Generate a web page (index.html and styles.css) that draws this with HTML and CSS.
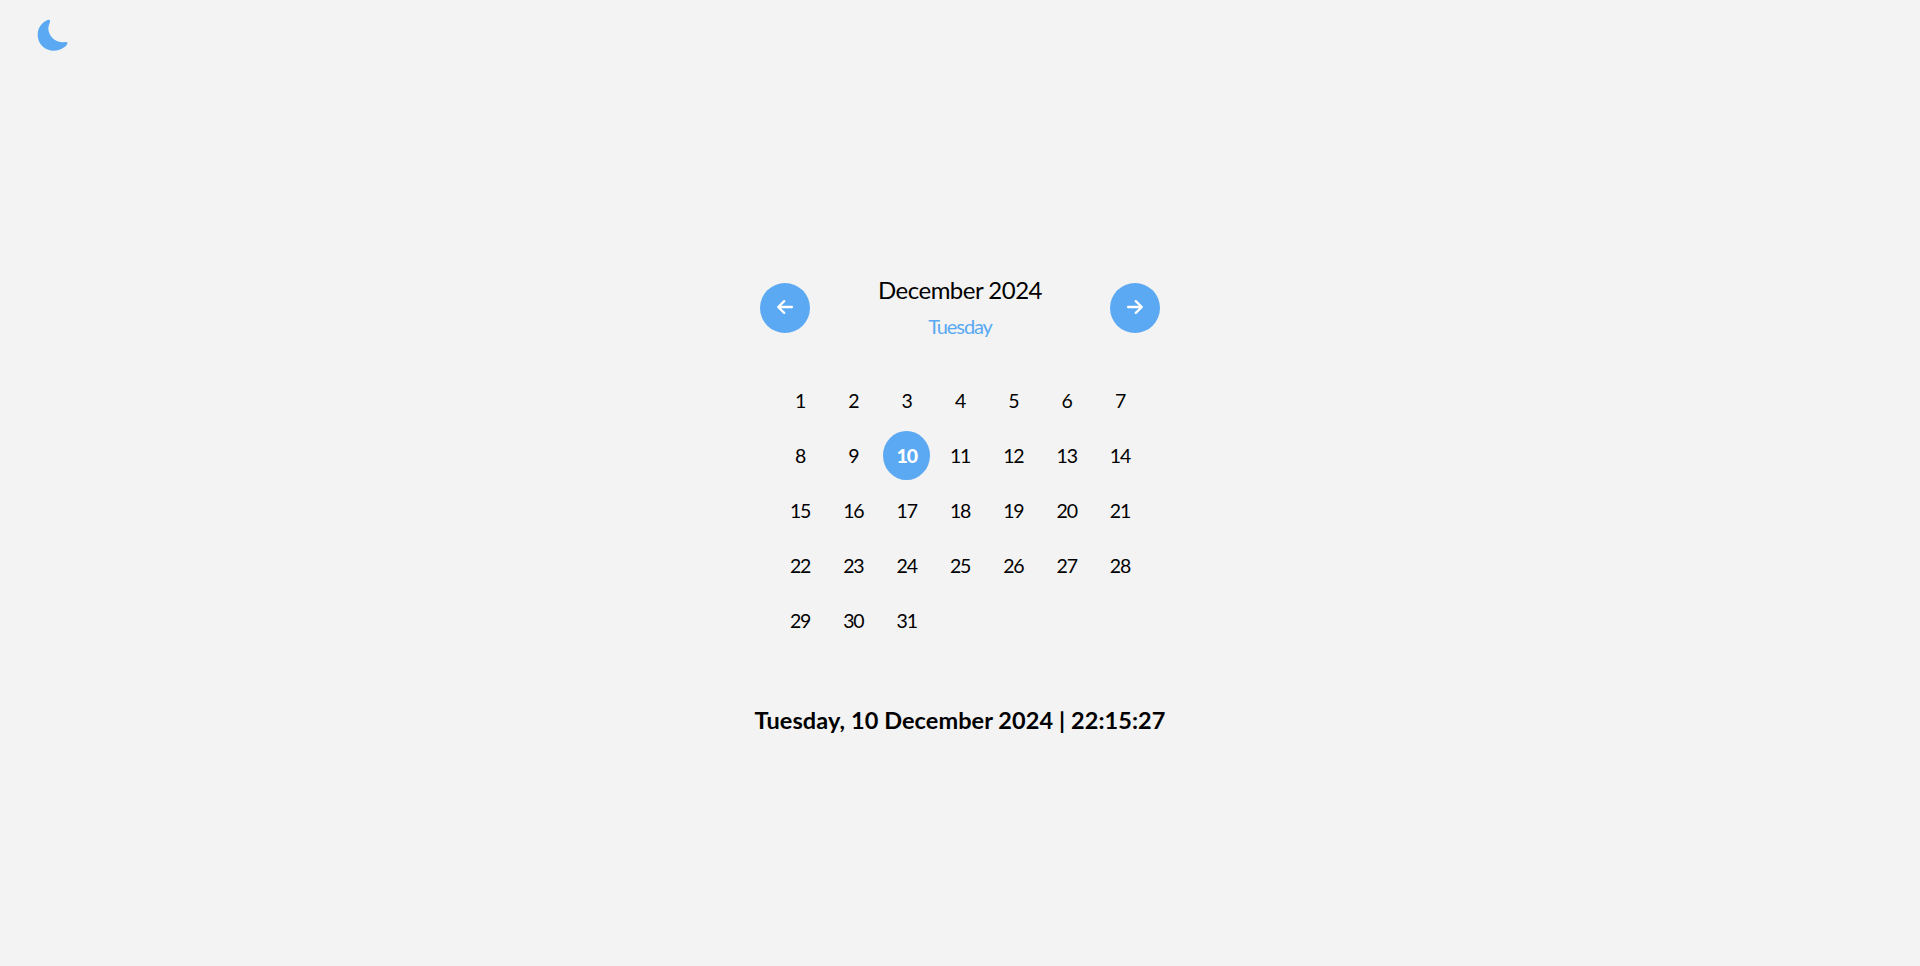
FILE: index.html
```html
<!DOCTYPE html>
<html lang="en">
<head>
<meta charset="utf-8">
<title>Calendar</title>
<link rel="stylesheet" href="styles.css">
</head>
<body>
<header class="topbar">
<svg class="moon" viewBox="0 0 93 96"><path d="M34 2Q41 1 39 9C35 18 34 25 34 31C36 52 54 70 78 70L87 69Q93 69 91 75C83 87 68 95 51 95C24 95 2 75 2 47C2 26 15 9 34 2Z"/></svg>
</header>
<main class="calendar">
<div class="head">
<button class="nav" aria-label="Previous month"><svg class="arrow" viewBox="0 0 18 16"><path d="M16 8H2.4M8.2 2.1L2.2 8L8.2 13.9"/></svg></button>
<div class="titles"><div class="month">December 2024</div><div class="weekday">Tuesday</div></div>
<button class="nav" aria-label="Next month"><svg class="arrow" viewBox="0 0 18 16"><path d="M2 8H15.6M9.8 2.1L15.8 8L9.8 13.9"/></svg></button>
</div>
<div class="days">
<span>1</span><span>2</span><span>3</span><span>4</span><span>5</span><span>6</span><span>7</span>
<span>8</span><span>9</span><span class="today">10</span><span>11</span><span>12</span><span>13</span><span>14</span>
<span>15</span><span>16</span><span>17</span><span>18</span><span>19</span><span>20</span><span>21</span>
<span>22</span><span>23</span><span>24</span><span>25</span><span>26</span><span>27</span><span>28</span>
<span>29</span><span>30</span><span>31</span>
</div>
<div class="clock">Tuesday, 10 December 2024 | 22:15:27</div>
</main>
</body>
</html>
```
FILE: styles.css
```css
body {
  margin: 0;
  height: 966px;
  overflow: hidden;
  background: #f3f3f3;
  color: #000;
  font-family: "Gill Sans", "Gill Sans MT", Lato, sans-serif;
}
.topbar { box-sizing: border-box; height: 271px; padding: 19px 0 0 36.7px; }
.moon { display: block; width: 31px; height: 32px; fill: #5aa9f2; }
.calendar { width: 480px; margin: 0 auto; }
.head { display: flex; justify-content: space-between; align-items: center; height: 74px; padding: 0 40px; }
.nav {
  display: flex;
  justify-content: center;
  align-items: center;
  width: 50px;
  height: 50px;
  padding: 0 0 3px;
  border: 0;
  border-radius: 50%;
  background: #5aa9f2;
}
.arrow { width: 18px; height: 16px; fill: none; stroke: #fff; stroke-width: 2.3; stroke-linecap: round; stroke-linejoin: round; }
.titles { padding-bottom: 4px; text-align: center; white-space: nowrap; }
.month { font-size: 24px; line-height: 40px; letter-spacing: -0.5px; }
.weekday { font-size: 20px; line-height: 32px; letter-spacing: -1.1px; color: #5aa9f2; }
.days {
  display: grid;
  grid-template-columns: repeat(7, 47px);
  grid-auto-rows: 49px;
  gap: 6px 6.33px;
  justify-content: center;
  margin-top: 31px;
  font-size: 19.5px;
  line-height: 49px;
  text-align: center;
  letter-spacing: -1.2px;
}
.today { border-radius: 50%; background: #5aa9f2; color: #fff; font-weight: 900; }
.clock { margin-top: 55px; font-size: 23.5px; line-height: 40px; font-weight: 700; letter-spacing: 0.08px; text-align: center; white-space: nowrap; }
```
